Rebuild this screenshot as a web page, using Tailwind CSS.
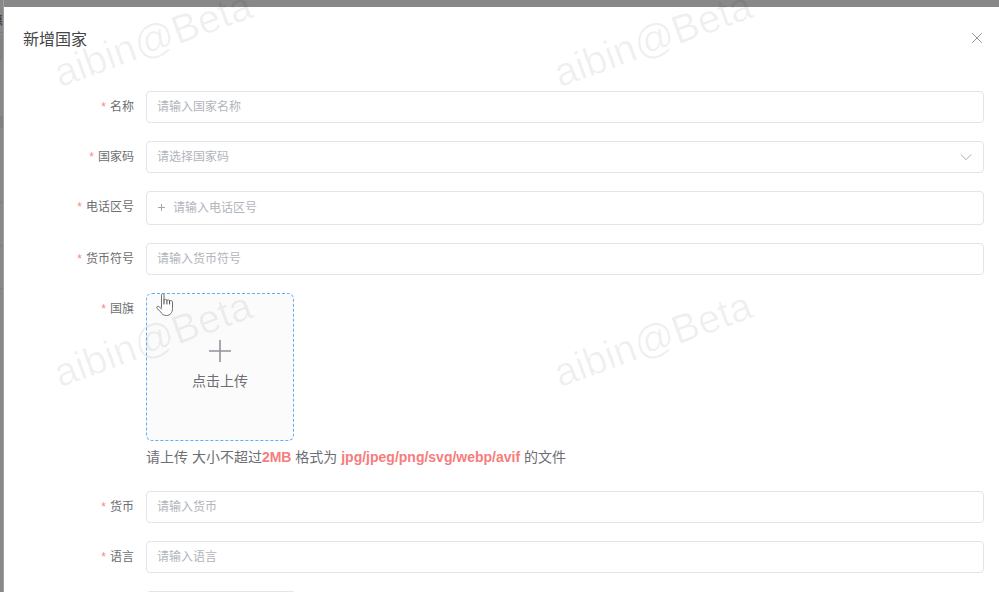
<!DOCTYPE html>
<html lang="zh-CN">
<head>
<meta charset="utf-8">
<meta name="viewport" content="width=device-width, initial-scale=1">
<title>新增国家</title>
<script src="https://cdn.jsdelivr.net/npm/@tailwindcss/browser@4"></script>
</head>
<body class="relative h-screen overflow-hidden bg-[#888888] pt-[7px] pl-1 text-[#6c6e72] font-['Liberation_Sans','Noto_Sans_CJK_SC',sans-serif]">
  <!-- page behind the dialog -->
  <div class="absolute inset-y-0 left-0 w-1 overflow-hidden border-r border-[#a0a0a0]" aria-hidden="true">
    <span class="absolute right-0 top-[13px] text-xs leading-4 text-[#303133]">惠</span>
    <span class="absolute inset-x-0 top-8 h-px bg-[#777b83]"></span>
    <span class="absolute inset-x-0 top-9 h-6 bg-[#828282]"></span>
    <span class="absolute inset-x-0 top-[116px] h-3 bg-[#808080]"></span>
    <span class="absolute inset-x-0 top-[202px] h-px bg-[#7e7e7e]"></span>
    <span class="absolute inset-x-0 top-[245px] h-px bg-[#7e7e7e]"></span>
    <span class="absolute inset-x-0 top-[288px] h-px bg-[#7e7e7e]"></span>
  </div>

  <main role="dialog" aria-labelledby="title" class="min-h-full bg-white">
    <header class="flex items-start justify-between pt-4 pr-3.5 pl-[19px]">
      <h1 id="title" class="text-base leading-[34px] text-[#444548]">新增国家</h1>
      <button type="button" aria-label="关闭" class="mt-[7px] flex size-4 items-center justify-center text-[#909399]">
        <svg class="size-3" viewBox="0 0 12 12" fill="none" stroke="currentColor" aria-hidden="true"><path d="M1.2 1.2 10.8 10.8M10.8 1.2 1.2 10.8"/></svg>
      </button>
    </header>

    <form class="flex flex-col gap-[18px] pt-[34px] pr-[15px] text-xs">
      <div class="flex gap-3">
        <label for="name" class="w-[130px] text-right leading-8"><span class="mr-1 text-[#f78989]">*</span>名称</label>
        <input id="name" type="text" placeholder="请输入国家名称" class="h-8 min-w-0 flex-1 rounded border border-[#e2e4ea] bg-white px-2.5 outline-none placeholder:text-[#b2b5bb]">
      </div>
      <div class="flex gap-3">
        <label for="code" class="w-[130px] text-right leading-8"><span class="mr-1 text-[#f78989]">*</span>国家码</label>
        <div class="relative min-w-0 flex-1">
          <select id="code" class="block h-8 w-full appearance-none rounded border border-[#e2e4ea] bg-white px-2.5 text-[#b2b5bb] outline-none"><option>请选择国家码</option></select>
          <svg class="pointer-events-none absolute top-2.5 right-3 size-3 text-[#a8abb2]" viewBox="0 0 12 12" fill="none" stroke="currentColor" aria-hidden="true"><path d="M.8 3.5 6 8.7l5.200-5.200"/></svg>
        </div>
      </div>
      <div class="flex gap-3">
        <label for="area" class="w-[130px] text-right leading-8"><span class="mr-1 text-[#f78989]">*</span>电话区号</label>
        <div class="flex h-[34px] min-w-0 flex-1 items-center gap-2 rounded border border-[#e2e4ea] px-2.5">
          <svg class="size-2 text-[#a3a6ad]" viewBox="0 0 8 8" fill="none" stroke="currentColor" aria-label="+" role="img"><path d="M4.500 0v7M1 3.500h7"/></svg>
          <input id="area" type="text" placeholder="请输入电话区号" class="h-8 min-w-0 flex-1 outline-none placeholder:text-[#b2b5bb]">
        </div>
      </div>
      <div class="flex gap-3">
        <label for="symbol" class="w-[130px] text-right leading-8"><span class="mr-1 text-[#f78989]">*</span>货币符号</label>
        <input id="symbol" type="text" placeholder="请输入货币符号" class="h-8 min-w-0 flex-1 rounded border border-[#e2e4ea] bg-white px-2.5 outline-none placeholder:text-[#b2b5bb]">
      </div>
      <div class="flex gap-3">
        <label for="flag" class="w-[130px] text-right leading-8"><span class="mr-1 text-[#f78989]">*</span>国旗</label>
        <div class="min-w-0 flex-1 text-sm">
          <div class="relative size-[148px]">
            <button id="flag" type="button" class="flex size-full flex-col items-center justify-center gap-1.5 rounded-md border border-dashed border-[#5cb0ff] bg-[#fbfbfb] pb-1.5 text-[#6c6e72]">
              <svg class="size-7 text-[#909399]" viewBox="0 0 28 28" fill="none" stroke="currentColor" stroke-width="1.600" aria-hidden="true"><path d="M14 3v22M3 14h22"/></svg>
              <span class="leading-5">点击上传</span>
            </button>
            <svg class="pointer-events-none absolute top-0 left-2.5 z-20 h-6 w-[18px]" viewBox="0 0 18 24" fill="#fff" stroke="#6c6e78" stroke-linejoin="round" stroke-linecap="round" aria-hidden="true">
              <path d="M5.500 14.500V2.200c0-2 2.500-2 2.500 0v5c.5-1.300 2.700-1.200 2.900.4.600-1.200 2.500-1 2.700.5.900-1.100 2.900-.6 2.900 1v6.500c0 4-2.300 6.900-6 6.900-3.100 0-4.700-1.400-6-3.900L1 15.500c-1-1.700.8-3 2.200-1.800l2.300 2.500"/>
              <path d="M8 7v4M10.900 7.600V11M13.600 8.100V11" fill="none" stroke="#404250"/>
            </svg>
          </div>
          <p class="leading-8">请上传 大小不超过<b class="text-[#f77c7c]">2MB</b> 格式为 <b class="text-[#f77c7c]">jpg/jpeg/png/svg/webp/avif</b> 的文件</p>
        </div>
      </div>
      <div class="flex gap-3">
        <label for="currency" class="w-[130px] text-right leading-8"><span class="mr-1 text-[#f78989]">*</span>货币</label>
        <input id="currency" type="text" placeholder="请输入货币" class="h-8 min-w-0 flex-1 rounded border border-[#e2e4ea] bg-white px-2.5 outline-none placeholder:text-[#b2b5bb]">
      </div>
      <div class="flex gap-3">
        <label for="language" class="w-[130px] text-right leading-8"><span class="mr-1 text-[#f78989]">*</span>语言</label>
        <input id="language" type="text" placeholder="请输入语言" class="h-8 min-w-0 flex-1 rounded border border-[#e2e4ea] bg-white px-2.5 outline-none placeholder:text-[#b2b5bb]">
      </div>
      <div class="flex gap-3">
        <span class="w-[130px]"></span>
        <input type="text" aria-label="排序" class="h-8 w-[150px] rounded border border-[#e2e4ea] bg-white px-2.5 outline-none">
      </div>
    </form>
  </main>

  <!-- watermark tiles, 500 x 300 each -->
  <div class="pointer-events-none absolute top-0 left-0 z-10 text-[40px] leading-none text-black/6 select-none" aria-hidden="true">
    <span class="absolute top-[19px] left-[49px] -rotate-20">aibin@Beta</span>
    <span class="absolute top-[19px] left-[549px] -rotate-20">aibin@Beta</span>
    <span class="absolute top-[319px] left-[49px] -rotate-20">aibin@Beta</span>
    <span class="absolute top-[319px] left-[549px] -rotate-20">aibin@Beta</span>
  </div>
</body>
</html>
